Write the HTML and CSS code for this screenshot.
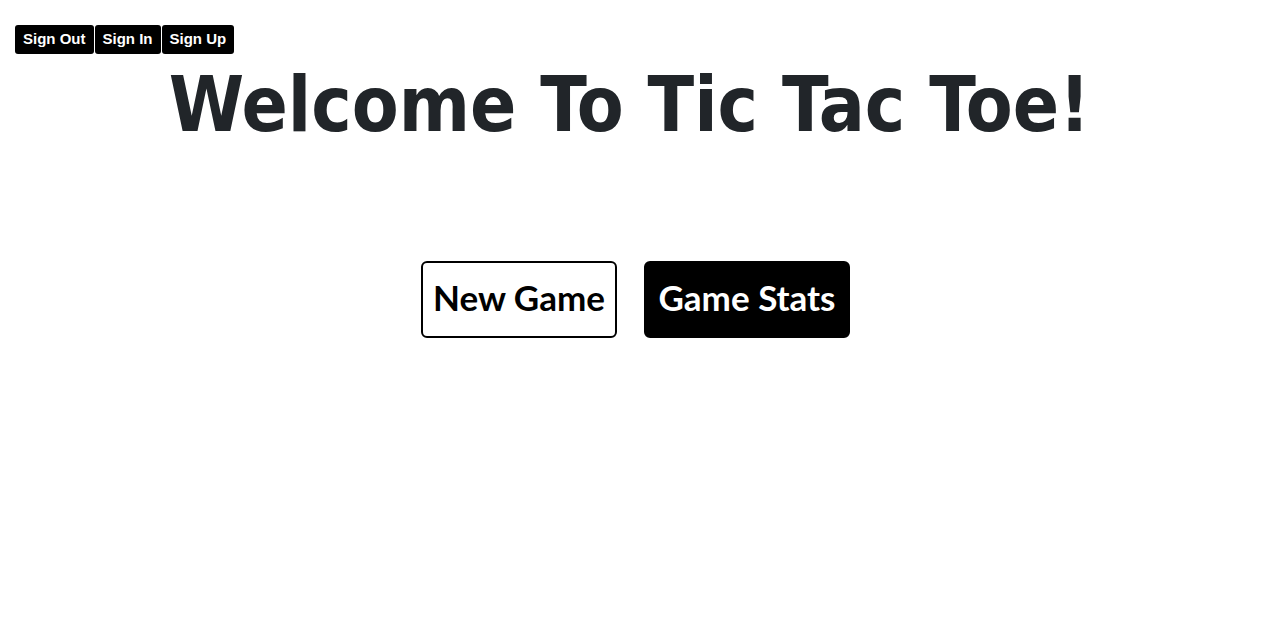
FILE: index.html
```html
<!DOCTYPE html>
<html>
<head>
<meta charset="utf-8">
<link rel="stylesheet" href="styles.css">
</head>
<body>
<nav class="auth">
  <button class="auth-btn">Sign Out</button>
  <button class="auth-btn">Sign In</button>
  <button class="auth-btn">Sign Up</button>
</nav>
<h1 class="title">Welcome To Tic Tac Toe!</h1>
<div class="actions">
  <button class="big-btn outline">New Game</button>
  <button class="big-btn solid">Game Stats</button>
</div>
</body>
</html>
```
FILE: styles.css
```css
html, body {
  margin: 0;
  padding: 0;
  background: #fff;
}
body {
  font-family: "Liberation Sans", Arial, sans-serif;
}
.auth {
  display: flex;
  gap: 1px;
  padding: 25px 0 0 15px;
}
.auth-btn {
  background: #000;
  color: #fff;
  border: none;
  border-radius: 3px;
  height: 29px;
  padding: 0 8px 3px 8px;
  font-family: "Liberation Sans", Arial, sans-serif;
  font-weight: bold;
  font-size: 15px;
}
.title {
  margin: 6px 0 0 0;
  text-align: center;
  font-family: "DejaVu Sans Condensed", "DejaVu Sans", sans-serif;
  font-weight: bold;
  font-size: 76px;
  line-height: 90px;
  color: #212529;
  padding-right: 10px;
}
.actions {
  display: flex;
  justify-content: center;
  gap: 27px;
  margin-top: 111px;
  padding-left: 2px;
}
.big-btn {
  height: 77px;
  border-radius: 6px;
  font-family: "Lato", sans-serif;
  font-weight: bold;
  font-size: 35px;
  padding: 0 6px 5px 6px;
  box-sizing: border-box;
}
.outline {
  width: 196px;
  background: #fff;
  color: #000;
  border: 2px solid #000;
}
.solid {
  width: 206px;
  background: #000;
  color: #fff;
  border: 2px solid #000;
}
```
